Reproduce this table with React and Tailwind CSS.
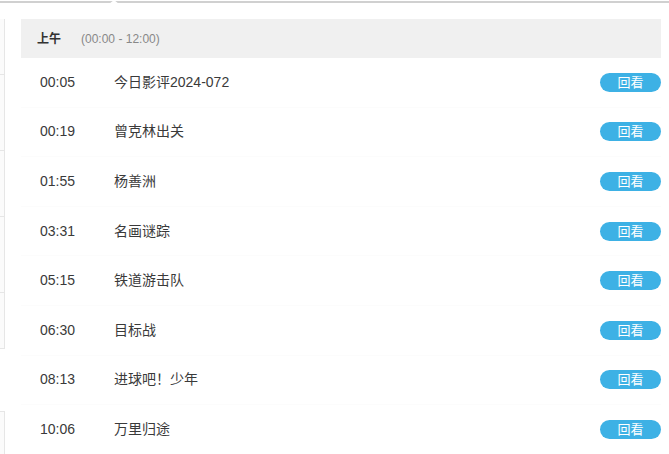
import React from 'react';

const programs = [
  { time: '00:05', title: '今日影评2024-072' },
  { time: '00:19', title: '曾克林出关' },
  { time: '01:55', title: '杨善洲' },
  { time: '03:31', title: '名画谜踪' },
  { time: '05:15', title: '铁道游击队' },
  { time: '06:30', title: '目标战' },
  { time: '08:13', title: '进球吧！少年' },
  { time: '10:06', title: '万里归途' },
];

const sideBoxes = ['h-[56px]', 'h-[76px]', 'h-[66px]', 'h-[76px]', 'h-[56px]'];

const App = () => {
  return (
    <div className="relative w-[669px] h-[454px] overflow-hidden bg-white font-['Liberation_Sans','Noto_Sans_CJK_SC',sans-serif]">
      {/* tab line with indicator */}
      <div className="relative mt-px h-[2px] bg-[#d0d0d0]">
        <span className="absolute left-[109px] -top-px w-0 h-0 border-x-[5px] border-x-transparent border-b-[4px] border-b-white" />
      </div>

      <div className="flex mt-[16px]">
        {/* left edge of side panel */}
        <div className="w-[21px] shrink-0">
          <div className="w-[5px]">
            {sideBoxes.map((h, i) => (
              <div key={i} className={`${h} bg-[#fbfbfb] border-r border-b border-[#e6e6e6]`} />
            ))}
            <div className="h-[62px]" />
            <div className="h-[60px] bg-[#fbfbfb] border-r border-t border-[#e6e6e6]" />
          </div>
        </div>

        {/* schedule */}
        <div className="w-[640px]">
          <div className="flex items-center h-[39px] bg-[#f0f0f0] pl-[16px] text-[12px]">
            <span className="font-bold text-[#333]">上午</span>
            <span className="ml-[20px] text-[#888]">(00:00 - 12:00)</span>
          </div>
          {programs.map((p) => (
            <div key={p.time} className="flex items-center h-[49.6px] border-b border-[#fcfcfc] text-[14px] text-[#3a3a3a]">
              <span className="w-[93px] pl-[19px]">{p.time}</span>
              <span className="flex-1">{p.title}</span>
              <button className="w-[61px] h-[19px] rounded-full bg-[#3db1e5] text-white text-[13px] leading-[19px] text-center">
                回看
              </button>
            </div>
          ))}
        </div>
      </div>
    </div>
  );
};

export default App;
